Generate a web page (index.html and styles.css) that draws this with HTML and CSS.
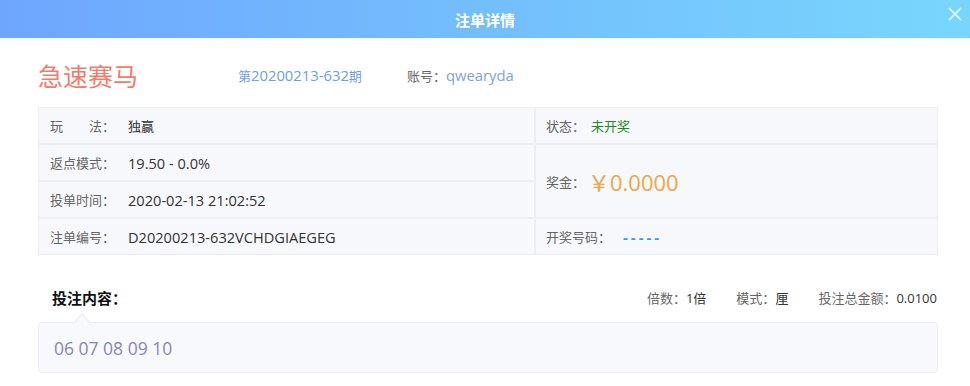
FILE: index.html
```html
<!DOCTYPE html>
<html lang="zh-CN">
<head>
<meta charset="utf-8">
<title>注单详情</title>
<link rel="stylesheet" href="styles.css">
</head>
<body>
<div class="dialog">
  <header class="head">
    <span class="head-title">注单详情</span>
    <span class="close">
      <svg width="14" height="14" viewBox="0 0 14 14"><path d="M1 1L13 13M13 1L1 13" stroke="#fff" stroke-width="1.4" fill="none"/></svg>
    </span>
  </header>
  <div class="info">
    <div class="game">急速赛马</div>
    <div class="issue">第<span class="en-lg">20200213-632</span>期</div>
    <div class="account"><span class="lbl">账号：</span><span class="acc en-lg">qwearyda</span></div>
  </div>
  <div class="grid">
    <div class="cell c-l r1"><span class="label">玩　　法：</span><span class="val">独赢</span></div>
    <div class="cell c-r r1"><span class="lbl">状态：</span><span class="status">未开奖</span></div>
    <div class="cell c-l r2"><span class="label">返点模式：</span><span class="val en">19.50 - 0.0%</span></div>
    <div class="cell c-r r23"><span class="lbl">奖金：</span><span class="money">￥0.0000</span></div>
    <div class="cell c-l r3"><span class="label">投单时间：</span><span class="val en">2020-02-13 21:02:52</span></div>
    <div class="cell c-l r4"><span class="label">注单编号：</span><span class="val en">D20200213-632VCHDGIAEGEG</span></div>
    <div class="cell c-r r4"><span class="lbl">开奖号码：</span><span class="dash">-----</span></div>
  </div>
  <div class="bet-head">
    <div class="bet-title">投注内容：</div>
    <div class="bet-meta">
      <span><span class="lbl">倍数：</span><span class="val">1倍</span></span>
      <span><span class="lbl">模式：</span><span class="val">厘</span></span>
      <span><span class="lbl">投注总金额：</span><span class="val">0.0100</span></span>
    </div>
  </div>
  <div class="bet-box">
    <span class="nums">06 07 08 09 10</span>
  </div>
</div>
</body>
</html>
```
FILE: styles.css
```css
* { box-sizing: border-box; }
html, body { margin: 0; padding: 0; background: #fff; }
body {
  font-family: "Open Sans", "Noto Sans CJK SC", sans-serif;
  font-size: 13px;
  color: #333;
  width: 970px;
  height: 386px;
  overflow: hidden;
}
.head {
  position: relative;
  height: 38px;
  background: linear-gradient(90deg, #6ea6fe 0%, #78d6fc 100%);
  display: flex;
  align-items: center;
  justify-content: center;
}
.head-title {
  color: #fff;
  font-size: 15px;
  font-weight: bold;
  font-family: "Noto Sans CJK SC", sans-serif;
}
.close {
  position: absolute;
  right: 8px;
  top: 7px;
  width: 14px;
  height: 14px;
  display: flex;
}
.info {
  height: 69px;
  padding: 4px 0 0 38px;
  display: flex;
  align-items: center;
}
.game {
  width: 200px;
  font-family: "Noto Sans CJK SC", sans-serif;
  font-size: 25px;
  color: #f27b6c;
}
.issue { color: #6b9fe6; width: 169px; }
.en-lg { font-size: 14.8px; }
.lbl { color: #666; }
.acc { color: #7aa4e2; }
.grid {
  margin-left: 38px;
  width: 900px;
  display: grid;
  grid-template-columns: 495px 1fr;
  grid-template-rows: 35px 35px 35px 35px;
  gap: 2px;
  background: #eceef2;
  border: 1px solid #eceef2;
}
.cell {
  background: #f7f8fb;
  display: flex;
  align-items: center;
  padding-left: 11px;
}
.c-l { grid-column: 1; }
.c-r { grid-column: 2; padding-left: 10px; }
.r1 { grid-row: 1; }
.r2 { grid-row: 2; }
.r3 { grid-row: 3; }
.r4 { grid-row: 4; }
.r23 { grid-row: 2 / 4; }
.label { width: 78px; color: #666; }
.val { color: #333; }
.en { font-size: 14.6px; }
.status { color: #1f8a1f; margin-left: 6px; }
.money { color: #f2a63e; font-size: 22px; margin-left: 3px; }
.dash { color: #2d9bf0; font-weight: bold; font-size: 15px; margin-left: 12px; letter-spacing: 3px; }
.bet-head {
  margin-top: 27px;
  height: 30px;
  display: flex;
  align-items: center;
  justify-content: space-between;
  padding: 0 33px 0 52px;
}
.bet-title {
  font-family: "Noto Sans CJK SC", sans-serif;
  font-size: 15px;
  font-weight: bold;
  color: #111;
}
.bet-meta { display: flex; gap: 30px; }
.bet-box {
  position: relative;
  margin: 10px 0 0 38px;
  width: 900px;
  height: 51px;
  background: #f8f9fc;
  border: 1px solid #eceef3;
  border-radius: 4px;
  display: flex;
  align-items: center;
  padding-left: 15px;
}
.bet-box::before {
  content: "";
  position: absolute;
  left: 34px;
  top: -10px;
  width: 0;
  height: 0;
  border-left: 9px solid transparent;
  border-right: 9px solid transparent;
  border-bottom: 10px solid #eceef3;
}
.bet-box::after {
  content: "";
  position: absolute;
  left: 35px;
  top: -8px;
  width: 0;
  height: 0;
  border-left: 8px solid transparent;
  border-right: 8px solid transparent;
  border-bottom: 9px solid #f8f9fc;
}
.nums { color: #8a86b8; font-size: 17.5px; }
```
